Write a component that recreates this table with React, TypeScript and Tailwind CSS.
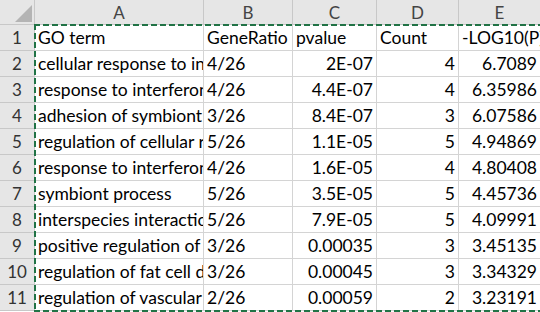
import React from "react";

const rows: [string, string, string, string, string][] = [
  ["GO term", "GeneRatio", "pvalue", "Count", "-LOG10(P)"],
  ["cellular response to interferon-gamma", "4/26", "2E-07", "4", "6.7089"],
  ["response to interferon-gamma", "4/26", "4.4E-07", "4", "6.35986"],
  ["adhesion of symbiont to host", "3/26", "8.4E-07", "3", "6.07586"],
  ["regulation of cellular response to stress", "5/26", "1.1E-05", "5", "4.94869"],
  ["response to interferon-beta", "4/26", "1.6E-05", "4", "4.80408"],
  ["symbiont process", "5/26", "3.5E-05", "5", "4.45736"],
  ["interspecies interaction between organisms", "5/26", "7.9E-05", "5", "4.09991"],
  ["positive regulation of cytokine production", "3/26", "0.00035", "3", "3.45135"],
  ["regulation of fat cell differentiation", "3/26", "0.00045", "3", "3.34329"],
  ["regulation of vascular permeability", "2/26", "0.00059", "2", "3.23191"],
];

const cols = ["A", "B", "C", "D", "E"];
const widths = ["w-[169px]", "w-[89px]", "w-[84px]", "w-[82px]", "w-[82px]"];

export default function App() {
  return (
    <div
      className="relative w-[540px] h-[312px] overflow-hidden bg-white text-black"
      style={{ fontFamily: "Lato, 'Liberation Sans', sans-serif" }}
    >
      {/* header row */}
      <div className="flex h-[25px]">
        <div className="relative w-[35px] shrink-0 bg-[#e6e6e6] border-r border-b border-[#c8c8c8]">
          <div className="absolute right-[2px] bottom-[2px] w-0 h-0 border-l-[17px] border-l-transparent border-b-[17px] border-b-[#b4b4b4]" />
        </div>
        {cols.map((c, i) => (
          <div
            key={c}
            className={`${widths[i]} shrink-0 bg-[#e6e6e6] border-r border-b border-[#c8c8c8] flex items-center justify-center text-[17px] leading-none text-[#444444]`}
          >
            {c}
          </div>
        ))}
      </div>
      {rows.map((r, ri) => (
        <div key={ri} className="flex h-[26px]">
          <div className="w-[35px] shrink-0 bg-[#e6e6e6] border-r border-b border-[#c8c8c8] flex items-center justify-center text-[17px] leading-none text-[#333333]">
            {ri + 1}
          </div>
          {r.map((v, ci) => {
            const numeric = ri > 0 && ci >= 2;
            return (
              <div
                key={ci}
                className={`${widths[ci]} shrink-0 border-r border-b border-[#d4d4d4] flex items-end overflow-hidden whitespace-nowrap text-[17.5px] leading-none pb-[4px] ${
                  numeric ? "justify-end pr-[3px]" : "justify-start pl-[3px]"
                }`}
              >
                {v}
              </div>
            );
          })}
        </div>
      ))}
      {/* copy selection marching ants */}
      <svg className="absolute left-0 top-0 pointer-events-none" width="540" height="312">
        <line x1="35" y1="24" x2="35" y2="312" stroke="#217346" strokeWidth="2" strokeDasharray="6 3" />
        <line x1="34" y1="25" x2="540" y2="25" stroke="#217346" strokeWidth="2" strokeDasharray="6 3" />
        <line x1="34" y1="311" x2="540" y2="311" stroke="#217346" strokeWidth="2" strokeDasharray="6 3" />
      </svg>
    </div>
  );
}
